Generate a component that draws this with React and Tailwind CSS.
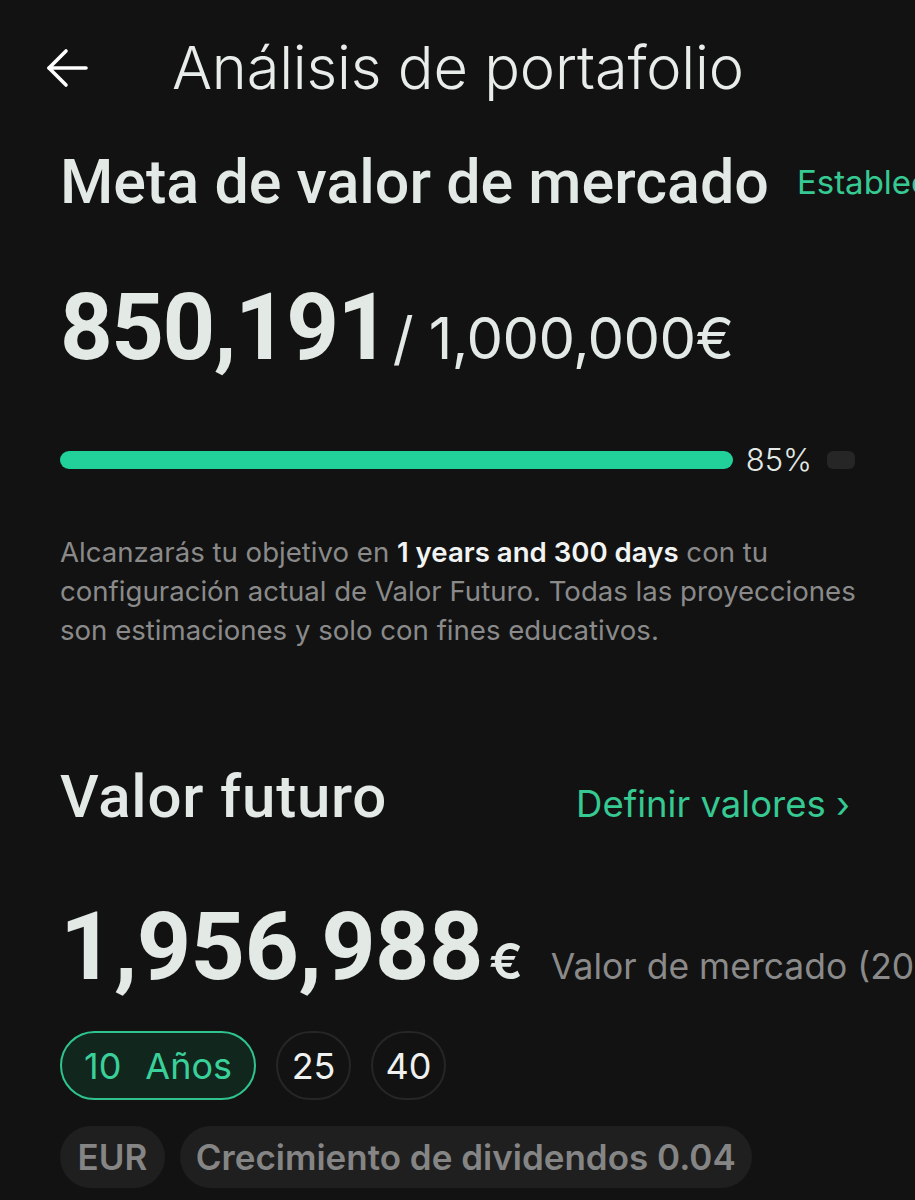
import React from "react";

const ROBOTO = { fontFamily: "Roboto, 'Noto Sans', sans-serif" };
const INTER = { fontFamily: "Inter, 'Noto Sans', sans-serif" };

export default function App() {
  return (
    <div className="w-[915px] h-[1200px] overflow-hidden bg-[#121212] text-[#e3e9e5]" style={INTER}>
      <header className="flex items-center h-[136px] pl-[45px]">
        <svg width="44" height="44" viewBox="0 0 44 44" fill="none" stroke="#ffffff" strokeWidth="3.6" strokeLinecap="round" strokeLinejoin="round" className="shrink-0">
          <path d="M4 22H41" />
          <path d="M21 5L4 22L21 39" />
        </svg>
        <h1 className="ml-[83px] text-[59.5px] font-light leading-none tracking-[-0.2px] text-[#e8ede9] whitespace-nowrap">Análisis de portafolio</h1>
      </header>

      <section className="pl-[60px]">
        <div className="flex items-center whitespace-nowrap mt-[16px]">
          <h2 className="text-[61px] font-medium leading-none" style={ROBOTO}>Meta de valor de mercado</h2>
          <span className="ml-[28px] text-[33px] leading-none text-[#36c992]">Establecer</span>
        </div>

        <div className="flex items-baseline whitespace-nowrap mt-[69px]">
          <span className="text-[92px] font-bold leading-none tracking-[-1.5px]" style={ROBOTO}>850,191</span>
          <span className="ml-[4px] text-[58px] leading-none tracking-[-0.6px]">/ 1,000,000€</span>
        </div>

        <div className="flex items-center mt-[70px] w-[795px]">
          <div className="h-[18px] w-[676px] rounded-full bg-[#22d19a]" />
          <span className="ml-[13px] text-[31px] font-light leading-none text-[#e3e9e5]">85%</span>
          <div className="ml-[15px] h-[18px] w-[28px] rounded-[6px] bg-[#262626]" />
        </div>

        <p className="mt-[58px] w-[800px] text-[27.6px] leading-[39px] text-[#8a8a8a]">
          Alcanzarás tu objetivo en <span className="font-semibold text-[#f2f4f3]">1 years and 300 days</span> con tu configuración actual de Valor Futuro. Todas las proyecciones son estimaciones y solo con fines educativos.
        </p>

        <div className="flex items-baseline justify-between w-[790px] whitespace-nowrap mt-[117px]">
          <h2 className="text-[60px] font-medium leading-none tracking-[0.8px]" style={ROBOTO}>Valor futuro</h2>
          <span className="text-[36.5px] leading-none text-[#36c992]">Definir valores ›</span>
        </div>

        <div className="flex items-baseline whitespace-nowrap mt-[72px]">
          <span className="text-[95px] font-bold leading-none tracking-[-0.6px]" style={ROBOTO}>1,956,988</span>
          <span className="ml-[6px] text-[50px] font-semibold leading-none">€</span>
          <span className="ml-[28px] text-[35.5px] leading-none text-[#8a8a8a]">Valor de mercado (2024)</span>
        </div>

        <div className="flex items-center gap-[20px] mt-[37px]">
          <div className="flex items-center h-[69px] px-[22px] rounded-full border-2 border-[#2fc38d] bg-[#11271e] text-[#3ad09a] text-[36px] leading-none whitespace-nowrap">
            10<span className="ml-[24px]">Años</span>
          </div>
          <div className="flex items-center justify-center h-[69px] w-[75px] rounded-full border-2 border-[#262626] text-[36px] leading-none text-[#eef1ef]">25</div>
          <div className="flex items-center justify-center h-[69px] w-[75px] rounded-full border-2 border-[#262626] text-[36px] leading-none text-[#eef1ef]">40</div>
        </div>

        <div className="flex items-center gap-[15px] mt-[26px] whitespace-nowrap">
          <div className="flex items-center h-[62px] px-[17.5px] rounded-full bg-[#1f1f1f] text-[35px] font-semibold leading-none text-[#858585]">EUR</div>
          <div className="flex items-center h-[62px] px-[16px] rounded-full bg-[#1f1f1f] text-[35px] font-semibold leading-none text-[#858585]">Crecimiento de dividendos 0.04</div>
        </div>
      </section>
    </div>
  );
}
